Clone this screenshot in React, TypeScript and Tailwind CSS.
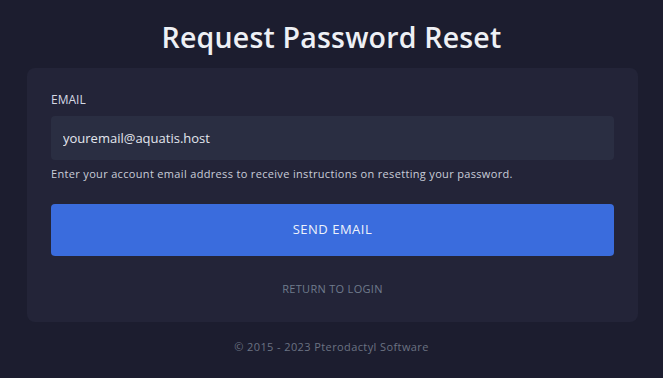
export default function App() {
  return (
    <div
      className="min-h-[378px] w-full bg-[#1c1d2f] flex flex-col items-center"
      style={{ fontFamily: "'Open Sans', 'Noto Sans', sans-serif" }}
    >
      <h2 className="mt-[17px] text-[28.5px] leading-[40px] font-semibold text-[#eef0f5] tracking-[0.2px]">
        Request Password Reset
      </h2>

      <form className="mt-[11px] w-[611px] ml-[2px] rounded-lg bg-[#232438] px-6 pt-[24px] pb-[25px] flex flex-col">
        <label className="text-[12px] leading-[16px] text-[#d5d9e4] uppercase">Email</label>
        <input
          readOnly
          value="youremail@aquatis.host"
          className="mt-[8px] h-[44px] w-full rounded bg-[#2a2e42] px-3 text-[13px] text-[#e3e6ee] outline-none"
        />
        <p className="mt-[6px] text-[11px] leading-[15px] text-[#c9cdd9] tracking-[0.33px]">
          Enter your account email address to receive instructions on resetting your password.
        </p>
        <button
          type="button"
          className="mt-[23px] h-[52px] w-full rounded bg-[#3a6cdd] text-[13px] text-[#eef2fb] uppercase tracking-[0.5px]"
        >
          Send Email
        </button>
        <a className="mt-[25px] self-center text-[11px] leading-[16px] text-[#6f7b8c] uppercase tracking-[0.3px]">
          Return to Login
        </a>
      </form>

      <p className="mt-[17px] text-[11px] leading-[16px] text-[#6b7282] tracking-[0.4px]">
        © 2015 - 2023 Pterodactyl Software
      </p>
    </div>
  );
}
